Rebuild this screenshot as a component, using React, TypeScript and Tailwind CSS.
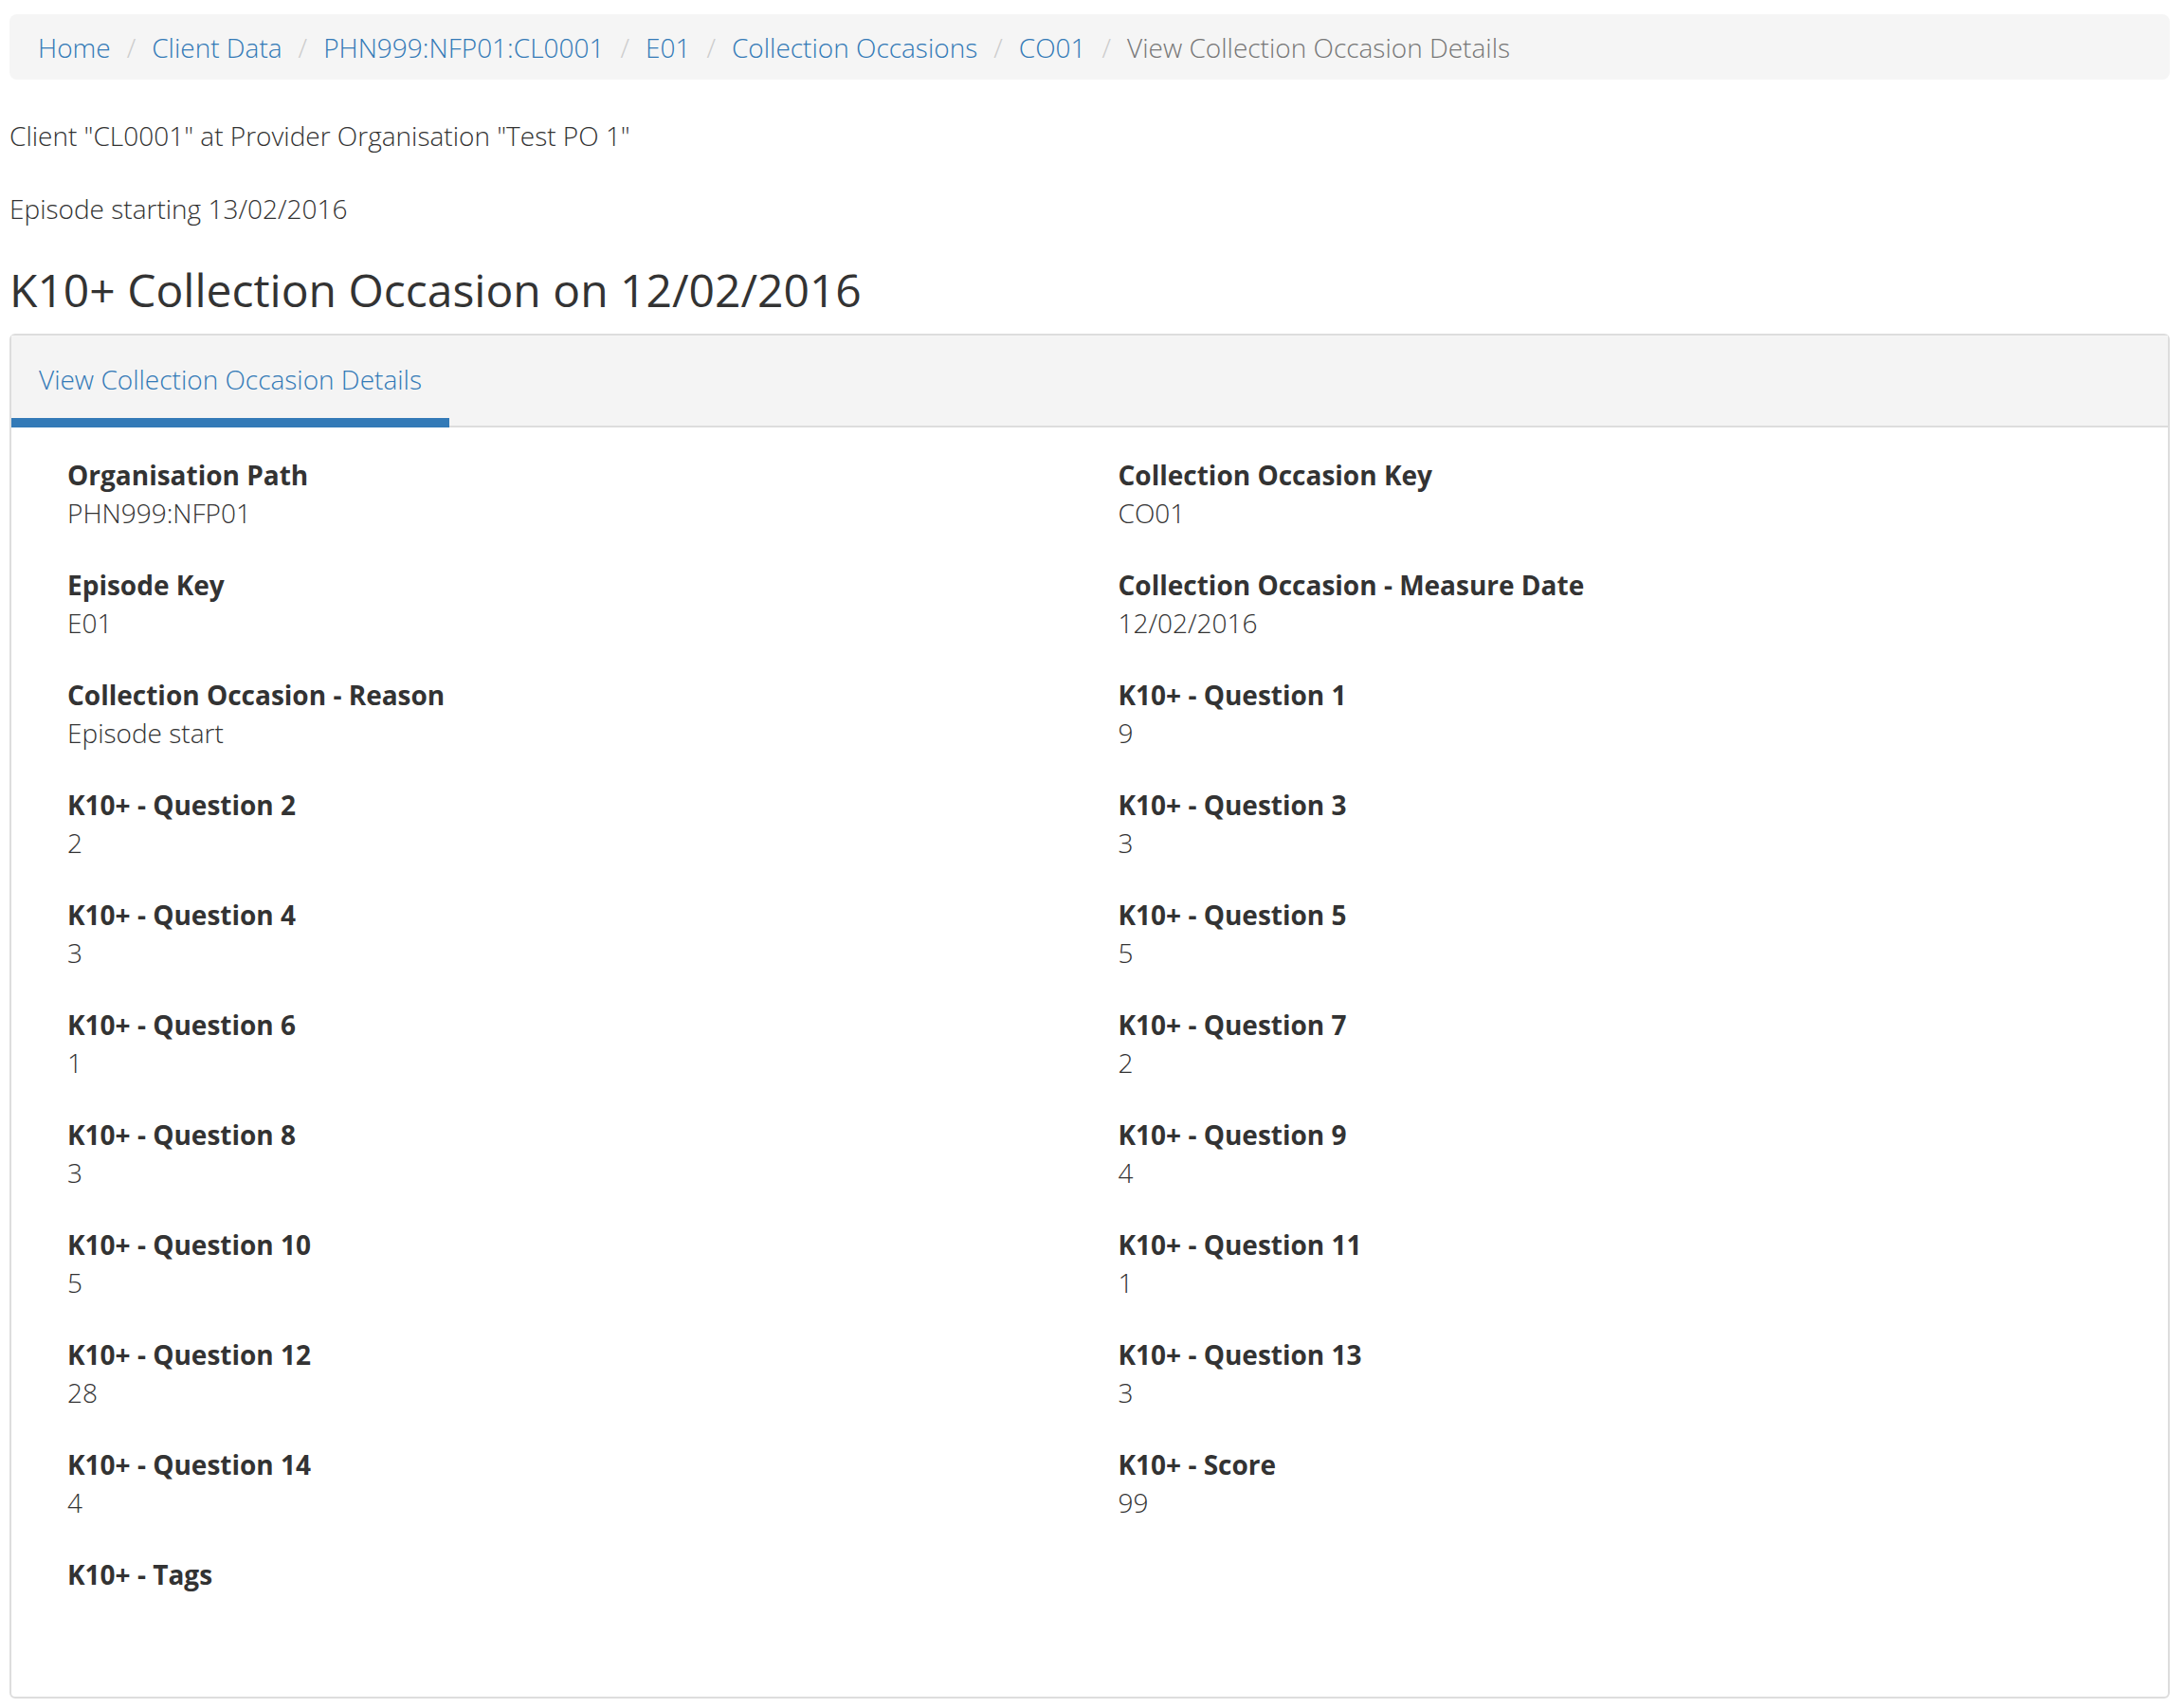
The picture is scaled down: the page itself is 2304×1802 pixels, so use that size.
const crumbs = [
  "Home",
  "Client Data",
  "PHN999:NFP01:CL0001",
  "E01",
  "Collection Occasions",
  "CO01",
];

const fields: [string, string][] = [
  ["Organisation Path", "PHN999:NFP01"],
  ["Collection Occasion Key", "CO01"],
  ["Episode Key", "E01"],
  ["Collection Occasion - Measure Date", "12/02/2016"],
  ["Collection Occasion - Reason", "Episode start"],
  ["K10+ - Question 1", "9"],
  ["K10+ - Question 2", "2"],
  ["K10+ - Question 3", "3"],
  ["K10+ - Question 4", "3"],
  ["K10+ - Question 5", "5"],
  ["K10+ - Question 6", "1"],
  ["K10+ - Question 7", "2"],
  ["K10+ - Question 8", "3"],
  ["K10+ - Question 9", "4"],
  ["K10+ - Question 10", "5"],
  ["K10+ - Question 11", "1"],
  ["K10+ - Question 12", "28"],
  ["K10+ - Question 13", "3"],
  ["K10+ - Question 14", "4"],
  ["K10+ - Score", "99"],
  ["K10+ - Tags", ""],
];

export default function App() {
  return (
    <div className="min-h-[1802px] bg-white pl-[10px] pr-[15px] pt-[15px] font-['Open_Sans',sans-serif] text-[28px] leading-[40px] font-light text-[#333]">
      <nav className="flex h-[69px] items-center rounded-[8px] bg-[#f5f5f5] px-[30px]">
        {crumbs.map((c) => (
          <span key={c} className="flex items-center">
            <span className="text-[#337ab7]">{c}</span>
            <span className="px-[17px] text-[#ccc]">/</span>
          </span>
        ))}
        <span className="text-[#777]">View Collection Occasion Details</span>
      </nav>

      <p className="mt-[39px]">Client "CL0001" at Provider Organisation "Test PO 1"</p>
      <p className="mt-[37px]">Episode starting 13/02/2016</p>
      <h1 className="mt-[36px] text-[48px] leading-[60px] font-normal">
        K10+ Collection Occasion on 12/02/2016
      </h1>

      <div className="mt-[16px] rounded-[6px] border-2 border-[#ddd]">
        <div className="flex h-[97px] items-end border-b-2 border-[#ddd] bg-[#f4f4f4]">
          <div className="-mb-[2px] flex h-[99px] items-center border-b-[10px] border-[#337ab7] px-[29px] pt-[7px] text-[#337ab7]">
            View Collection Occasion Details
          </div>
        </div>
        <dl className="grid grid-cols-2 gap-x-[60px] px-[59px] pt-[30px] pb-[33px]">
          {fields.map(([label, value]) => (
            <div key={label} className="mb-[36px]">
              <dt className="font-bold">{label}</dt>
              <dd className="min-h-[40px]">{value}</dd>
            </div>
          ))}
        </dl>
      </div>
    </div>
  );
}
